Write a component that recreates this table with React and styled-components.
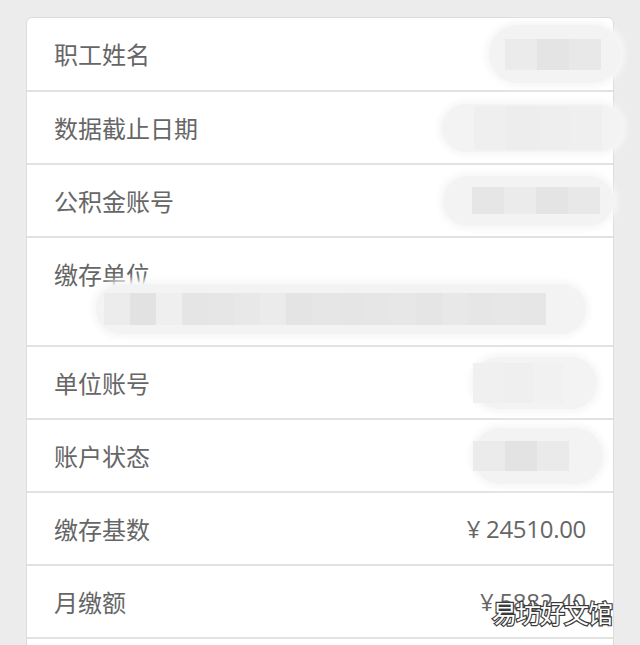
import React from 'react';
import styled, { createGlobalStyle } from 'styled-components';

const GlobalStyle = createGlobalStyle`
  html, body {
    margin: 0;
    padding: 0;
    background: #ececec;
    overflow: hidden;
  }
  body {
    font-family: "Open Sans", "Noto Sans CJK SC", sans-serif;
  }
`;

const Page = styled.div`
  width: 640px;
  height: 645px;
  padding-top: 17px;
  box-sizing: border-box;
  overflow: hidden;
`;

const Card = styled.div`
  position: relative;
  margin: 0 26px;
  background: #fff;
  border: 1px solid #dcdcdc;
  border-radius: 6px;
`;

const Row = styled.div`
  display: flex;
  align-items: center;
  justify-content: space-between;
  height: ${(p) => (p.$first ? 72 : 71)}px;
  padding: 0 27px 0 27px;
  border-top: ${(p) => (p.$first ? 'none' : '2px solid #e2e2e2')};
`;

const TallRow = styled.div`
  display: flex;
  flex-direction: column;
  height: 109px;
  padding: 22px 27px 0 27px;
  box-sizing: border-box;
  border-top: 2px solid #e2e2e2;
`;

const Label = styled.span`
  font-family: "Noto Sans CJK SC", sans-serif;
  font-size: 24px;
  color: #666;
  line-height: 28px;
`;

const Value = styled.span`
  font-family: "Open Sans", "Noto Sans CJK SC", sans-serif;
  font-size: 24px;
  color: #666;
  letter-spacing: -0.3px;
`;

// 打码区域
const Smudge = styled.div`
  position: relative;
  display: flex;
  align-items: center;
  width: ${(p) => p.$w}px;
  height: ${(p) => p.$h}px;
  margin-right: ${(p) => p.$mr || 0}px;
  margin-top: ${(p) => p.$mt || 0}px;
  margin-left: ${(p) => p.$ml || 0}px;
  padding-left: ${(p) => p.$pl || 0}px;
  box-sizing: border-box;
  background: #f3f3f3;
  border-radius: ${(p) => p.$h / 2}px;
  box-shadow: 0 0 6px 4px #f7f7f7;
`;

const Cells = styled.div`
  display: flex;
  height: ${(p) => p.$h}px;
  filter: blur(0.6px);
`;

const Cell = styled.div`
  width: ${(p) => p.$w}px;
  height: 100%;
`;

const Watermark = styled.div`
  position: absolute;
  right: 1px;
  top: 578px;
  font-family: "Noto Sans CJK SC", sans-serif;
  font-size: 25px;
  line-height: 32px;
  color: #fff;
  -webkit-text-stroke: 2.4px #3a3a3a;
  paint-order: stroke fill;
  letter-spacing: -1px;
`;

function Blur({ w, h, cellH, cellW, shades, ...rest }) {
  return (
    <Smudge $w={w} $h={h} {...rest}>
      <Cells $h={cellH}>
        {shades.map((s, i) => (
          <Cell key={i} $w={cellW} style={{ background: s }} />
        ))}
      </Cells>
    </Smudge>
  );
}

function App() {
  return (
    <Page>
      <GlobalStyle />
      <Card>
        <Row $first>
          <Label>职工姓名</Label>
          <Blur w={132} h={58} $mr={-35} $pl={16} cellH={31} cellW={32}
            shades={['#ebebeb', '#e4e4e4', '#e8e8e8']} />
        </Row>
        <Row>
          <Label>数据截止日期</Label>
          <Blur w={180} h={48} $mr={-36} $pl={32} cellH={44} cellW={32}
            shades={['#efefef', '#ededed', '#eeeeee', '#efefef']} />
        </Row>
        <Row>
          <Label>公积金账号</Label>
          <Blur w={170} h={50} $mr={-27} $pl={29} cellH={27} cellW={32}
            shades={['#e6e6e6', '#ebebeb', '#e4e4e4', '#e8e8e8']} />
        </Row>
        <TallRow>
          <Label>缴存单位</Label>
          <Blur w={490} h={50} $ml={42} $mt={-4} $pl={8} cellH={32} cellW={26}
            shades={['#ececec', '#e2e2e2', '#efefef', '#e5e5e5', '#e6e6e6', '#e8e8e8', '#ebebeb', '#e4e4e4', '#e6e6e6', '#e5e5e5', '#e6e6e6', '#e7e7e7', '#e5e5e5', '#e8e8e8', '#e6e6e6', '#e7e7e7', '#e6e6e6']} />
        </TallRow>
        <Row>
          <Label>单位账号</Label>
          <Blur w={124} h={52} $mr={-11} $pl={0} cellH={40} cellW={30}
            shades={['#f0f0f0', '#efefef', '#f1f1f1']} />
        </Row>
        <Row>
          <Label>账户状态</Label>
          <Blur w={130} h={56} $mr={-17} $pl={0} cellH={30} cellW={32}
            shades={['#ebebeb', '#e3e3e3', '#eaeaea']} />
        </Row>
        <Row>
          <Label>缴存基数</Label>
          <Value>¥ 24510.00</Value>
        </Row>
        <Row>
          <Label>月缴额</Label>
          <Value>¥ 5882.40</Value>
        </Row>
        <Row />
        <Watermark>易坊好文馆</Watermark>
      </Card>
    </Page>
  );
}

export default App;
